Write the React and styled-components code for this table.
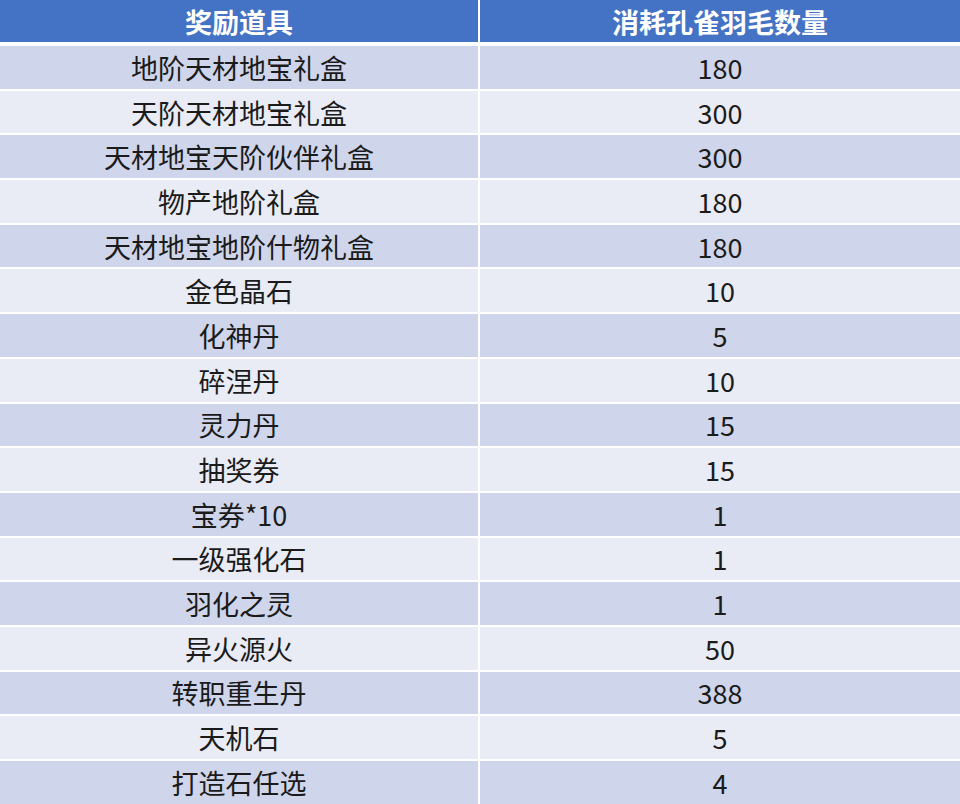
import React from "react";
import styled, { createGlobalStyle } from "styled-components";

const GlobalStyle = createGlobalStyle`
  html, body {
    margin: 0;
    padding: 0;
    background: #ffffff;
  }
  body {
    font-family: "Noto Sans CJK SC", "Noto Sans", sans-serif;
  }
`;

const Table = styled.div`
  width: 960px;
  height: 804px;
  overflow: hidden;
  display: grid;
  grid-template-columns: 478px 1fr;
  grid-auto-rows: 42.7px;
  grid-template-rows: 44px;
  column-gap: 2px;
  row-gap: 2px;
  background: #ffffff;
`;

const HeadCell = styled.div`
  background: #4472c4;
  color: #ffffff;
  font-weight: 700;
  font-size: 27px;
  display: flex;
  align-items: center;
  justify-content: center;
  margin-bottom: 1.7px;
`;

const Cell = styled.div`
  background: ${(p) => (p.$odd ? "#cfd5ea" : "#e9ebf5")};
  color: #1b1b1b;
  font-size: 27px;
  display: flex;
  align-items: center;
  justify-content: center;
  margin-top: ${(p) => (p.$first ? "1.5px" : "0")};
`;

const rows = [
  ["地阶天材地宝礼盒", "180"],
  ["天阶天材地宝礼盒", "300"],
  ["天材地宝天阶伙伴礼盒", "300"],
  ["物产地阶礼盒", "180"],
  ["天材地宝地阶什物礼盒", "180"],
  ["金色晶石", "10"],
  ["化神丹", "5"],
  ["碎涅丹", "10"],
  ["灵力丹", "15"],
  ["抽奖券", "15"],
  ["宝券*10", "1"],
  ["一级强化石", "1"],
  ["羽化之灵", "1"],
  ["异火源火", "50"],
  ["转职重生丹", "388"],
  ["天机石", "5"],
  ["打造石任选", "4"],
];

export default function App() {
  return (
    <>
      <GlobalStyle />
      <Table>
        <HeadCell>奖励道具</HeadCell>
        <HeadCell>消耗孔雀羽毛数量</HeadCell>
        {rows.map(([name, count], i) => (
          <React.Fragment key={name}>
            <Cell $odd={i % 2 === 0}>{name}</Cell>
            <Cell $odd={i % 2 === 0}>{count}</Cell>
          </React.Fragment>
        ))}
      </Table>
    </>
  );
}
